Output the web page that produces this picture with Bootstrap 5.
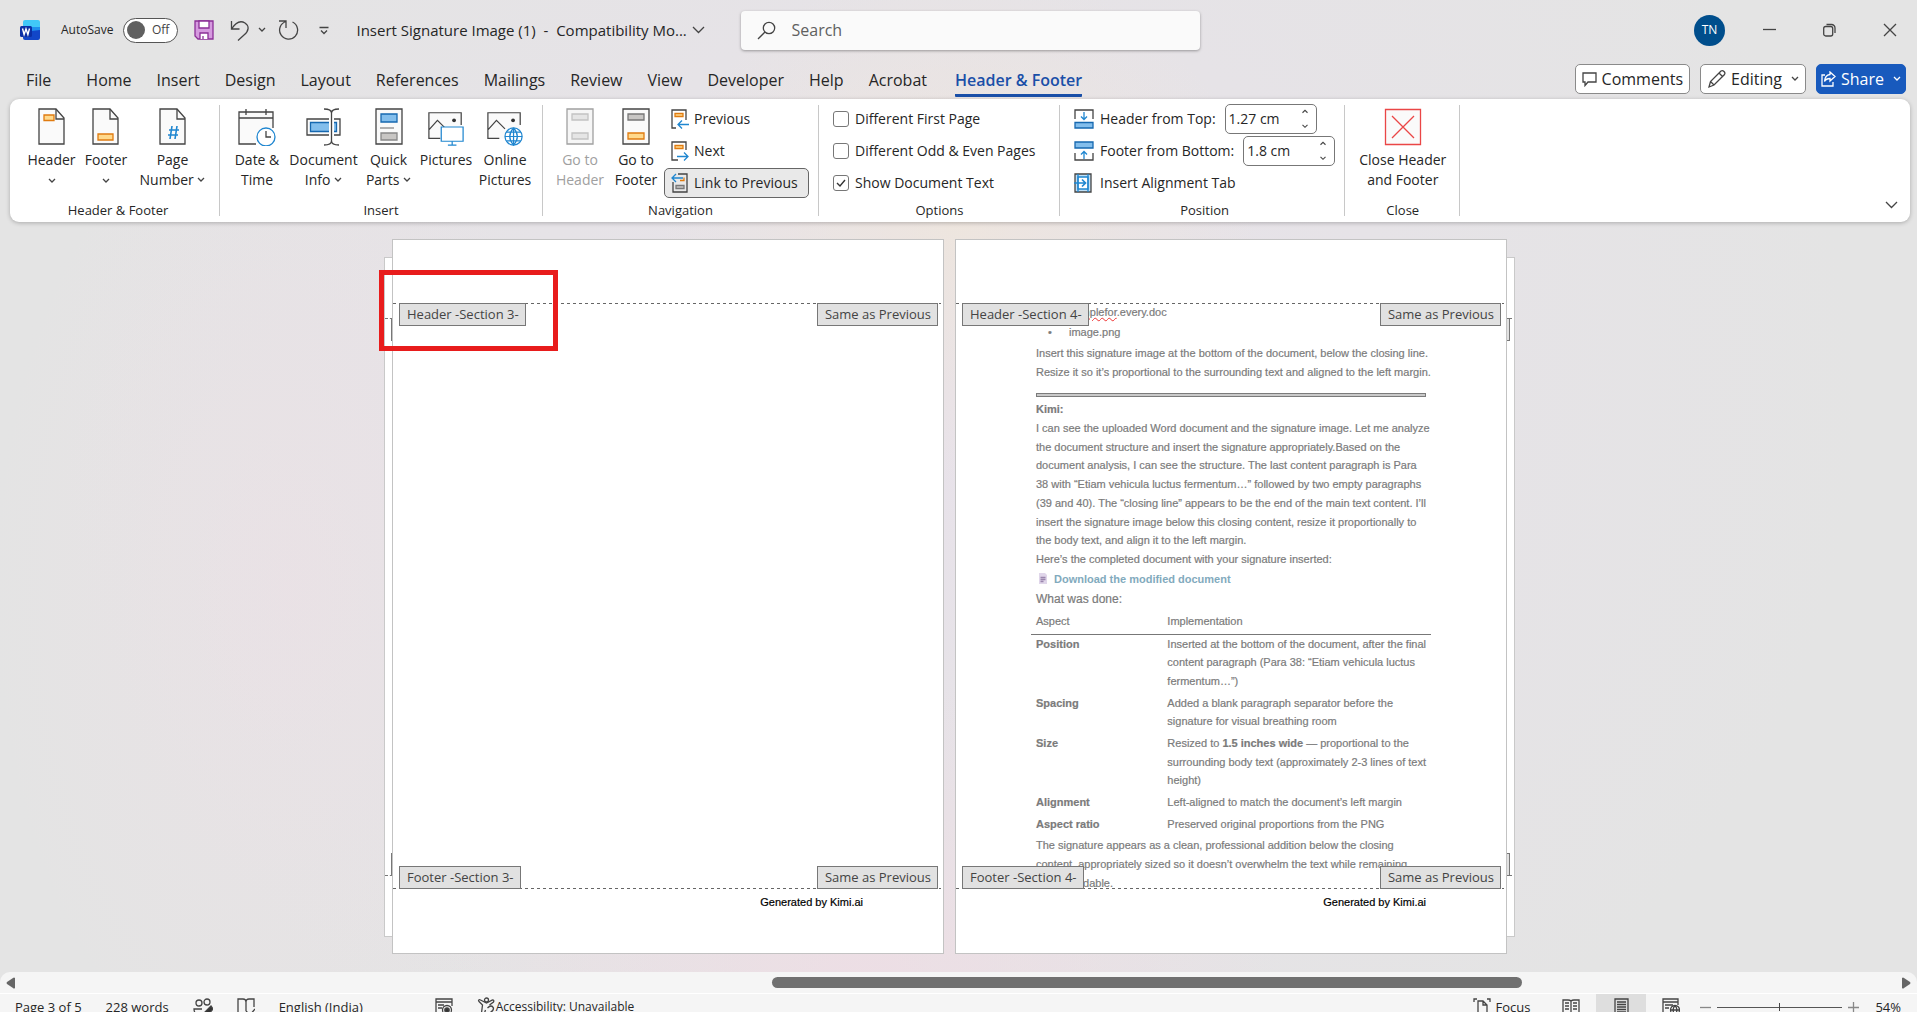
<!DOCTYPE html>
<html lang="en">
<head>
<meta charset="utf-8">
<meta name="viewport" content="width=device-width, initial-scale=1">
<title>Insert Signature Image (1) - Word</title>
<link href="https://cdn.jsdelivr.net/npm/bootstrap@5.3.0/dist/css/bootstrap.min.css" rel="stylesheet">
<style>
  body { font-family: "Open Sans", "Noto Sans", sans-serif; font-size: 14px; line-height: 20px; color: #262626; overflow: hidden; background: #e4e4e4; }
  button, input { font-family: inherit; color: inherit; }
  svg { display: block; flex: none; fill: none; stroke: #444; stroke-width: 1.3; }
  .plain { background: none; border: 0; padding: 0; display: flex; align-items: center; color: inherit; }
  .shell { height: calc(100vh + 8px); background:
      radial-gradient(ellipse 300px 260px at 50% 22%, rgba(239,230,220,.8), rgba(239,230,220,0)),
      radial-gradient(ellipse 420px 300px at 45% 96%, rgba(240,220,228,.7), rgba(240,220,228,0)),
      radial-gradient(ellipse 300px 520px at 15% 58%, rgba(238,224,230,.5), rgba(238,224,230,0)),
      radial-gradient(ellipse 900px 800px at 50% 40%, #e8e2ea, #e4e4e4 100%); }

  .titlebar { height: 60px; padding: 0 20px; }
  .brand-group { flex: 1 1 0; }
  .autosave { font-size: 12px; margin: 0 10px 0 21px; }
  .doc-title { font-size: 15px; margin-left: 27px; gap: 5px; white-space: nowrap; }
  .toggle { width: 55px; height: 25px; border: 1px solid #555; border-radius: 13px; background: #fff; padding: 0 8px 0 3px; font-size: 12px; justify-content: space-between; color: #444; }
  .toggle i { width: 18px; height: 18px; border-radius: 50%; background: #606060; }
  .searchbox { width: 459px; height: 39px; background: #fafafa; border-radius: 4px; box-shadow: 0 1px 3px rgba(0,0,0,.35); padding: 0 16px; gap: 16px; margin-left: 23px; }
  .searchbox input { border: 0; background: none; outline: 0; font-size: 16px; width: 100%; padding: 0; }
  .searchbox input::placeholder { color: #606060; opacity: 1; }
  .window-group { flex: 1 1 0; gap: 47px; }
  .avatar { width: 31px; height: 31px; border-radius: 50%; background: #004e8c; color: #fff; font-size: 12px; justify-content: center; margin-right: -9px; }

  .tabs { height: 39px; padding: 0 11px 0 26px; }
  .tabs nav { gap: 25px; }
  .tabs nav a { color: #262626; text-decoration: none; font-size: 16px; line-height: 28px; padding-top: 2px; border-bottom: 3px solid transparent; border-radius: 1px; }
  .tabs nav a:first-child { margin-right: 10px; }
  .tabs nav a.current { color: #1a4fa8; font-weight: 600; border-color: #1a4fa8; margin-left: 3px; }
  .cmds { gap: 10px; }
  .cmd { height: 30px; border: 1px solid #8a8a8a; border-radius: 5px; background: #fff; font-size: 16px; padding: 0 6px; gap: 5px; }
  .cmd.share { background: #185abd; border-color: #185abd; color: #fff; padding: 0 4px; }
  .cmd.share svg { stroke: #fff; }

  .ribbon { margin: 0 7px 0 10px; height: 123px; background: #fff; border-radius: 9px; box-shadow: 0 1px 4px rgba(0,0,0,.25); position: relative; padding: 4px 0; }
  .rgroup { padding: 0 9px; position: relative; }
  .rgroup::after { content: ""; position: absolute; right: 0; top: 2px; height: 111px; width: 1px; background: #c8c8c8; }
  .g-edges { padding: 0 9px 0 15px; }
  .g-insert, .g-nav { padding-right: 10px; }
  .g-options { padding: 0 14px; min-width: 241px; }
  .g-position { padding: 0 10px 0 14px; min-width: 283px; }
  .g-close { padding: 0 13px; min-width: 115px; }
  .rbody { height: 96px; }
  .rlabel { font-size: 13px; line-height: 22px; text-align: center; }
  .big { background: none; border: 0; padding: 5px 0 0; display: flex; flex-direction: column; align-items: center; gap: 4px; text-align: center; line-height: 20px; white-space: nowrap; }
  .big:disabled { color: #a0a0a0; }
  .big span svg { display: inline-block; }
  .w52 { width: 53px; } .w56 { width: 56px; } .w62 { width: 62px; } .w76 { width: 77px; }
  .rrow { height: 32px; display: flex; align-items: center; gap: 6px; white-space: nowrap; }
  .small-btn { height: 30px; width: 145px; border: 1px solid transparent; border-radius: 5px; background: none; padding: 0 6px; display: flex; align-items: center; gap: 5px; }
  .small-btn.on { background: #e9e9e9; border-color: #666; }
  .tick { appearance: none; width: 16px; height: 16px; border: 1px solid #777; border-radius: 3px; background: #fff; margin: 0; flex: none; }
  .tick:checked { background: #fff url("data:image/svg+xml,%3Csvg xmlns='http://www.w3.org/2000/svg' viewBox='0 0 14 14'%3E%3Cpath d='M3 7l3 3 5-6' fill='none' stroke='%23333' stroke-width='1.4'/%3E%3C/svg%3E") center/14px no-repeat; }
  .spin { width: 92px; height: 30px; border: 1px solid #777; border-radius: 5px; background: #fff; padding: 0 7px 0 3px; margin-left: 3px; display: flex; align-items: center; }
  .spin input { border: 0; padding: 0; width: 100%; outline: 0; background: none; }
  .spin div { display: flex; flex-direction: column; gap: 10px; }
  .collapse-btn { position: absolute; right: 12px; bottom: 13px; }

  .docarea { flex: 1 1 auto; min-height: 0; padding: 17px 18px 18px 0; }
  .spread { position: relative; gap: 11px; }
  .backsheet { position: absolute; top: 18px; bottom: 17px; width: 60px; background: #fff; border: 1px solid #c9c9c9; }
  .backsheet.lt { left: -8px; } .backsheet.rt { right: -8px; }
  .backsheet::before, .backsheet::after { content: ""; position: absolute; left: 0; right: 2px; border: 0 dashed #777; height: 22px; }
  .backsheet::before { top: 60px; border-top-width: 1px; }
  .backsheet::after { bottom: 60px; border-bottom-width: 1px; }
  .stub { position: absolute; left: 6px; right: 4px; height: 23px; background: #e1e1e1; border: 1px solid #777; }
  .stub.up { top: 60px; } .stub.down { bottom: 60px; }
  .sheet { position: relative; width: 552px; background: #fff; border: 1px solid #c3c3c3; display: flex; flex-direction: column; overflow: hidden; font-family: "Liberation Sans", Arial, sans-serif; font-size: 11px; }
  .zone { flex: none; height: 63px; margin-right: 2px; }
  .dash { flex: none; height: 1px; margin-right: 2px; background: repeating-linear-gradient(90deg, #666 0 3px, transparent 3px 6px); }
  .zone.made { height: 64px; color: #000; line-height: 18px; text-align: right; padding: 4px 78px 0 0; -webkit-text-stroke: .2px #000; }
  .tagbox { position: absolute; z-index: 2; height: 23px; padding: 0 6px 0 7px; background: #e1e1e1; border: 1px solid #777; color: #444; font: 13px/21px "Open Sans", sans-serif; white-space: nowrap; }
  .tagbox.t { top: 63px; } .tagbox.b { bottom: 64px; }
  .tagbox.l { left: 6px; } .tagbox.r { right: 5px; }
  .prose { flex: 1 1 0; min-height: 0; padding: 0 80px 0 80px; color: #7b7b7b; line-height: 1.7; -webkit-text-stroke: .2px #7b7b7b; }
  .prose p, .prose ul { margin: 0; white-space: nowrap; }
  .prose ul { padding-left: 33px; list-style: none; line-height: 20px; margin-bottom: 2px; margin-top: -2px; }
  .prose li { position: relative; }
  .prose li::before { content: "•"; position: absolute; left: -21px; }
  .prose u { text-decoration: underline wavy #e33; text-decoration-thickness: 1px; text-underline-offset: 1px; }
  .rule { height: 4px; border: 1px solid #7b7b7b; background: #c9c9c9; margin: 12px 0 3px; }
  .dl { color: #82aabd; font-weight: 700; text-decoration: none; line-height: 20px; display: flex; align-items: center; gap: 7px; -webkit-text-stroke: 0; padding-left: 3px; }
  .done { font-size: 12px; line-height: 21px; }
  .report { margin: 0 -5px; width: 400px; border-collapse: separate; border-spacing: 0; }
  .report th, .report td { padding: 0 5px 3px; vertical-align: top; white-space: nowrap; }
  .report thead th { font-weight: 400; line-height: 22px; padding-bottom: 2px; border-bottom: 1px solid #777; }
  .report tbody { position: relative; top: 0; }
  .report tbody th, .report tbody td { line-height: 1.7; }
  .report th:first-child { width: 134px; }
  .callout { position: absolute; z-index: 4; left: -13px; top: 31px; width: 179px; height: 81px; border: 5px solid #e81c1c; pointer-events: none; }

  .hscroll { height: 22px; background: #f5f5f5; border-bottom: 1px solid #fff; border-radius: 10px 10px 0 0; padding: 0 6px; }
  .hscroll .lane { flex: 1; margin: 0 10px; }
  .hscroll .thumb { height: 11px; border-radius: 6px; background: #707070; }
  .status { height: 26px; background: #f5f5f5; font-size: 13px; padding: 0 16px 0 15px; white-space: nowrap; }
  .access { font-size: 12px; }
  .viewbtn { width: 50px; height: 26px; justify-content: center; }
  .viewbtn.on { background: #dedede; }
  .zoomer { appearance: none; width: 125px; height: 9px; margin: 0 6px; background: linear-gradient(#555, #555) center/100% 1px no-repeat; }
  .zoomer::-webkit-slider-thumb { appearance: none; width: 1px; height: 8px; background: #444; }
</style>
<script src="https://cdn.jsdelivr.net/npm/bootstrap@5.3.0/dist/js/bootstrap.bundle.min.js"></script>
</head>
<body>
<svg width="0" height="0" class="position-absolute" aria-hidden="true">
  <symbol id="chev" viewBox="0 0 8 6"><path d="M1 1l3 3 3-3"/></symbol>
  <symbol id="chevup" viewBox="0 0 8 6"><path d="M1 4.500l3-3 3 3"/></symbol>
  <symbol id="leaf" viewBox="0 0 28 38"><path d="M1 1h17l8 9v26H1z" fill="#fafafa"/><path d="M18 1v10h8"/></symbol>
  <symbol id="scene" viewBox="0 0 38 40"><path d="M1 5h34v27H1z" fill="#fafafa" stroke="none"/><path d="M13 32H1V5h34v13M1 23l9-10 9 9"/><circle cx="27.500" cy="13" r="2" fill="#333" stroke="none"/></symbol>
</svg>
<div class="shell d-flex flex-column">

  <header class="titlebar d-flex align-items-center">
    <div class="brand-group d-flex align-items-center">
      <svg width="20" height="20" viewBox="0 0 20 20" style="stroke:none"><path d="M5 0h13a2 2 0 0 1 2 2v5H3V2a2 2 0 0 1 2-2z" fill="#41c8f8"/><path d="M3 7h17v7H3z" fill="#1f8fee"/><path d="M3 12l17-2v8a2 2 0 0 1-2 2H5a2 2 0 0 1-2-2z" fill="#1246c8"/><rect y="6" width="12" height="11" rx="1.500" fill="#0b2fa5"/><path d="M2.500 8.500l1.600 6 1.900-5.500 1.900 5.500 1.600-6" fill="none" stroke="#fff" stroke-width="1.400"/></svg>
      <span class="autosave" id="as">AutoSave</span>
      <button class="plain toggle" aria-labelledby="as"><i></i>Off</button>
      <button class="plain ms-3" aria-label="Save"><svg width="20" height="20" viewBox="0 0 20 20" style="stroke:#8b2f97"><path d="M1 1h18v18H4l-3-3z" fill="#d59adf"/><path d="M5 1h10v7H5z" fill="#fff"/><path d="M6 19v-6h8v6" fill="#fff"/><path d="M9 19v-3"/></svg></button>
      <button class="plain ms-3" aria-label="Undo"><svg width="20" height="21" viewBox="0 0 20 21"><path d="M1.500 1v8h8M1.500 9C6 2 11 .5 15 3c4.500 3 4 8-1 12l-6 5.500"/></svg></button>
      <button class="plain ms-2" aria-label="Undo options"><svg width="8" height="6"><use href="#chev"/></svg></button>
      <button class="plain ms-2 ps-1" aria-label="Redo"><svg width="21" height="21" viewBox="0 0 21 21"><path d="M1 1h7v7M8 1.500a9 9 0 1 0 6.500.5"/></svg></button>
      <button class="plain ms-3 ps-1" aria-label="Customize toolbar"><svg width="10" height="9" viewBox="0 0 10 9"><path d="M.5 1.500h9M2 4.500l3 3 3-3"/></svg></button>
      <button class="plain doc-title"><span>Insert Signature Image (1) &nbsp;- &nbsp;Compatibility Mo...</span><svg width="13" height="8" viewBox="0 0 13 8"><path d="M1 1l5.500 5.500L12 1"/></svg></button>
    </div>
    <div class="searchbox d-flex align-items-center">
      <svg width="19" height="19" viewBox="0 0 19 19"><circle cx="12" cy="7" r="5.700"/><path d="M8 11l-7 7"/></svg>
      <input type="text" placeholder="Search" aria-label="Search">
    </div>
    <div class="window-group d-flex align-items-center justify-content-end">
      <button class="plain avatar" aria-label="Account">TN</button>
      <button class="plain" aria-label="Minimize"><svg width="13" height="12"><path d="M0 5.500h13"/></svg></button>
      <button class="plain" aria-label="Restore"><svg width="13" height="14" viewBox="0 0 13 14"><rect x=".7" y="3.500" width="9" height="9.500" rx="2"/><path d="M3.500 1.500h5a3.500 3.500 0 0 1 3.500 3.500v5"/></svg></button>
      <button class="plain" aria-label="Close"><svg width="14" height="14"><path d="M1 1l12 12M13 1L1 13"/></svg></button>
    </div>
  </header>

  <div class="tabs d-flex justify-content-between align-items-start">
    <nav class="d-flex pt-1" aria-label="Ribbon tabs">
      <a href="#">File</a><a href="#">Home</a><a href="#">Insert</a><a href="#">Design</a><a href="#">Layout</a><a href="#">References</a><a href="#">Mailings</a><a href="#">Review</a><a href="#">View</a><a href="#">Developer</a><a href="#">Help</a><a href="#">Acrobat</a><a href="#" class="current" aria-current="page">Header &amp; Footer</a>
    </nav>
    <div class="cmds d-flex pt-1">
      <button class="cmd d-flex align-items-center"><svg width="15" height="16" viewBox="0 0 15 16"><path d="M1 2h13v9H6l-3 3.500V11H1z"/></svg>Comments</button>
      <button class="cmd d-flex align-items-center"><svg width="19" height="20" viewBox="0 0 19 20"><path d="M2 18l1.500-5.500L14 2q1.500-1 3 .5t.5 3L7 16zM12 4l4 4M3.500 12.500L7 16"/></svg>Editing<svg width="8" height="6" class="ms-1"><use href="#chev"/></svg></button>
      <button class="cmd share d-flex align-items-center"><svg width="15" height="16" viewBox="0 0 15 16"><path d="M4 4H1v11h11v-4M9 1l5 4.500L9 10V7.500q-4 0-5.500 3Q4 4 9 3.500z"/></svg>Share<svg width="8" height="6" class="ms-1"><use href="#chev"/></svg></button>
    </div>
  </div>

  <section class="ribbon d-flex">
    <div class="rgroup g-edges">
      <div class="rbody d-flex">
        <button class="big w52"><svg width="28" height="38"><use href="#leaf"/><path d="M6 7h10v5.500H6z" fill="#ffd98c" stroke="#e07b10"/></svg><span>Header<br><svg width="8" height="6"><use href="#chev"/></svg></span></button>
        <button class="big w56"><svg width="28" height="38"><use href="#leaf"/><path d="M6 26h15v6H6z" fill="#ffd98c" stroke="#e07b10"/></svg><span>Footer<br><svg width="8" height="6"><use href="#chev"/></svg></span></button>
        <button class="big w76"><svg width="28" height="38"><use href="#leaf"/><path d="M13 18l-2 13M18 18l-2 13M10 22h10M9 27h10" stroke="#1f86d0" stroke-width="1.600"/></svg><span>Page<br>Number <svg width="8" height="8" viewBox="0 0 8 8"><path d="M1 1l3 3 3-3"/></svg></span></button>
      </div>
      <div class="rlabel">Header &amp; Footer</div>
    </div>
    <div class="rgroup g-insert">
      <div class="rbody d-flex">
        <button class="big w56"><svg width="38" height="38" viewBox="0 0 38 38"><path d="M18 36H1V4h34v16" fill="#fafafa"/><path d="M1 10h34M8 1v6M28 1v6"/><circle cx="28" cy="29" r="9" fill="#fff" stroke="#1f86d0"/><path d="M28 23v6h5"/></svg><span>Date &amp;<br>Time</span></button>
        <button class="big w76"><svg width="36" height="38" viewBox="0 0 36 38"><path d="M1 11h33v16H1z" fill="#fafafa"/><path d="M4.500 14.500h26v9h-26z" fill="#83beec" stroke="#1668b0"/><path d="M25.500 3v32" stroke="#fff" stroke-width="5"/><path d="M18 1q7.500 0 7.500 4v28q0 4-7.500 4M33 1q-7.500 0-7.500 4v28q0 4 7.500 4"/></svg><span>Document<br>Info <svg width="8" height="8" viewBox="0 0 8 8"><path d="M1 1l3 3 3-3"/></svg></span></button>
        <button class="big w52"><svg width="28" height="38" viewBox="0 0 28 38"><path d="M1 1h26v35H1z" fill="#fafafa"/><path d="M6 6h16v8H6z" fill="#83beec" stroke="#1668b0"/><path d="M5 20h14" stroke="#888"/><path d="M6 25h16v7H6z" fill="#c8c6c4" stroke="#888"/></svg><span>Quick<br>Parts <svg width="8" height="8" viewBox="0 0 8 8"><path d="M1 1l3 3 3-3"/></svg></span></button>
        <button class="big w62"><svg width="38" height="38" viewBox="0 0 38 40"><use href="#scene"/><path d="M14 20h23v15H14z" fill="#fff" stroke="#1f86d0"/><path d="M25.500 35v4M21 39h9" stroke="#1f86d0"/></svg><span>Pictures</span></button>
        <button class="big w56"><svg width="38" height="38" viewBox="0 0 38 40"><use href="#scene"/><circle cx="28" cy="30" r="9" fill="#fff" stroke="#1f86d0"/><path d="M19 30h18M28 21v18M20.500 25.500h15M20.500 34.500h15M28 21q-8 9 0 18q8-9 0-18" stroke="#1f86d0"/></svg><span>Online<br>Pictures</span></button>
      </div>
      <div class="rlabel">Insert</div>
    </div>
    <div class="rgroup g-nav">
      <div class="rbody d-flex">
        <button class="big w56" disabled><svg width="28" height="38" viewBox="0 0 28 38" opacity=".5"><path d="M1 1h26v35H1z" fill="#eee"/><path d="M6 6h16v6H6zM6 25h16v6H6z" fill="#ccc" stroke="#888"/></svg><span>Go to<br>Header</span></button>
        <button class="big w56"><svg width="28" height="38" viewBox="0 0 28 38"><path d="M1 1h26v35H1z" fill="#fafafa"/><path d="M6 6h16v6H6z" fill="#c8c6c4" stroke="#777"/><path d="M6 25h16v6H6z" fill="#ffd98c" stroke="#e07b10"/></svg><span>Go to<br>Footer</span></button>
        <div>
          <div class="rrow"><button class="small-btn"><svg width="18" height="20" viewBox="0 0 18 20"><path d="M15 11V1H1v18h4"/><path d="M4 4.500h8v3H4z" fill="#ffd98c" stroke="#e07b10"/><path d="M18 15.500H7M11 11.500l-4 4 4 4" stroke="#1f86d0"/></svg>Previous</button></div>
          <div class="rrow"><button class="small-btn"><svg width="18" height="20" viewBox="0 0 18 20"><path d="M15 9V1H1v18h6"/><path d="M4 4.500h8v3H4z" fill="#ffd98c" stroke="#e07b10"/><path d="M6 15.500h11M13 11.500l4 4-4 4" stroke="#1f86d0"/></svg>Next</button></div>
          <div class="rrow"><button class="small-btn on"><svg width="18" height="20" viewBox="0 0 18 20"><path d="M7 1h9v18H2V9"/><path d="M9 7.500h4v-3" stroke="#e07b10"/><path d="M5 12.500h8v3H5z" fill="#c8c6c4" stroke="#777"/><path d="M12 5H1M5 1L1 5l4 4" stroke="#1f86d0"/></svg>Link to Previous</button></div>
        </div>
      </div>
      <div class="rlabel">Navigation</div>
    </div>
    <div class="rgroup g-options">
      <div class="rbody">
        <div class="rrow"><input class="tick" type="checkbox" id="o1"><label for="o1">Different First Page</label></div>
        <div class="rrow"><input class="tick" type="checkbox" id="o2"><label for="o2">Different Odd &amp; Even Pages</label></div>
        <div class="rrow"><input class="tick" type="checkbox" id="o3" checked><label for="o3">Show Document Text</label></div>
      </div>
      <div class="rlabel">Options</div>
    </div>
    <div class="rgroup g-position">
      <div class="rbody">
        <div class="rrow"><svg width="20" height="20" viewBox="0 0 20 20"><path d="M4 1H1v9M16 1h3v9M1 1h18"/><path d="M10 3v7M7 7.500l3 3 3-3" stroke="#1f86d0"/><path d="M1 13.500h18v5.500H1z" fill="#83beec" stroke="#1668b0"/></svg><label for="ht">Header from Top:</label><div class="spin"><input id="ht" type="text" value="1.27 cm"><div><button class="plain" aria-label="Increase header distance"><svg width="8" height="5"><use href="#chevup"/></svg></button><button class="plain" aria-label="Decrease header distance"><svg width="8" height="5"><use href="#chev"/></svg></button></div></div></div>
        <div class="rrow"><svg width="20" height="20" viewBox="0 0 20 20"><path d="M1 12v7h18v-7"/><path d="M10 18v-7M7 13.500l3-3 3 3" stroke="#1f86d0"/><path d="M1 1h18v6H1z" fill="#83beec" stroke="#1668b0"/></svg><label for="fb">Footer from Bottom:</label><div class="spin"><input id="fb" type="text" value="1.8 cm"><div><button class="plain" aria-label="Increase footer distance"><svg width="8" height="5"><use href="#chevup"/></svg></button><button class="plain" aria-label="Decrease footer distance"><svg width="8" height="5"><use href="#chev"/></svg></button></div></div></div>
        <div class="rrow"><button class="plain gap-2"><svg width="18" height="20" viewBox="0 0 18 20"><path d="M1 1h16v18H1z" fill="#bfe0f7"/><path d="M4 4h10v12H4z" fill="#fff" stroke="#1f86d0"/><path d="M4 1v18M14 1v18" stroke="#1f86d0"/><path d="M0 10h11M8 6.500l3.500 3.500L8 13.500" stroke="#1f86d0" stroke-width="1.700"/></svg>Insert Alignment Tab</button></div>
      </div>
      <div class="rlabel">Position</div>
    </div>
    <div class="rgroup g-close">
      <div class="rbody d-flex justify-content-center">
        <button class="big"><svg width="38" height="38" viewBox="0 0 38 38" style="stroke:#ea4646"><path d="M1.500 1.500h35v35h-35z" fill="#fafafa"/><path d="M8 8l22 22M30 8L8 30"/></svg><span>Close Header<br>and Footer</span></button>
      </div>
      <div class="rlabel">Close</div>
    </div>
    <button class="plain collapse-btn" aria-label="Collapse ribbon"><svg width="13" height="8" viewBox="0 0 13 8"><path d="M1 1l5.500 5.500L12 1"/></svg></button>
  </section>

  <main class="docarea d-flex justify-content-center">
    <div class="spread d-flex">
      <div class="backsheet lt"><div class="stub up"></div><div class="stub down"></div></div>
      <div class="backsheet rt"><div class="stub up"></div><div class="stub down"></div></div>
      <article class="sheet">
        <div class="zone"></div><div class="dash"></div>
        <div class="flex-grow-1"></div>
        <div class="dash"></div><div class="zone made">Generated by Kimi.ai</div>
        <span class="tagbox t l">Header -Section 3-</span><span class="tagbox t r">Same as Previous</span>
        <span class="tagbox b l">Footer -Section 3-</span><span class="tagbox b r">Same as Previous</span>
      </article>
      <article class="sheet">
        <div class="zone"></div><div class="dash"></div>
        <div class="prose">
          <ul><li><u>samplefor</u>.every.doc</li><li>image.png</li></ul>
          <p>Insert this signature image at the bottom of the document, below the closing line.<br>Resize it so it’s proportional to the surrounding text and aligned to the left margin.</p>
          <div class="rule"></div>
          <p><b>Kimi:</b></p>
          <p>I can see the uploaded Word document and the signature image. Let me analyze<br>the document structure and insert the signature appropriately.Based on the<br>document analysis, I can see the structure. The last content paragraph is Para<br>38 with “Etiam vehicula luctus fermentum…” followed by two empty paragraphs<br>(39 and 40). The “closing line” appears to be the end of the main text content. I’ll<br>insert the signature image below this closing content, resize it proportionally to<br>the body text, and align it to the left margin.</p>
          <p>Here’s the completed document with your signature inserted:</p>
          <a class="dl" href="#"><svg width="8" height="11" viewBox="0 0 8 11" style="stroke:#9a86ad"><path d="M0 0h6l2 2v9H0z" fill="#e0d6ea" stroke="none"/><path d="M1.500 4.500h5M1.500 6.500h5M1.500 8.500h3"/></svg>Download the modified document</a>
          <p class="done">What was done:</p>
          <table class="report">
            <thead><tr><th>Aspect</th><th>Implementation</th></tr></thead>
            <tbody>
              <tr><th>Position</th><td>Inserted at the bottom of the document, after the final<br>content paragraph (Para 38: “Etiam vehicula luctus<br>fermentum…”)</td></tr>
              <tr><th>Spacing</th><td>Added a blank paragraph separator before the<br>signature for visual breathing room</td></tr>
              <tr><th>Size</th><td>Resized to <b>1.5 inches wide</b> — proportional to the<br>surrounding body text (approximately 2-3 lines of text<br>height)</td></tr>
              <tr><th>Alignment</th><td>Left-aligned to match the document’s left margin</td></tr>
              <tr><th>Aspect ratio</th><td>Preserved original proportions from the PNG</td></tr>
            </tbody>
          </table>
          <p>The signature appears as a clean, professional addition below the closing<br>content, appropriately sized so it doesn’t overwhelm the text while remaining<br>easily readable.</p>
        </div>
        <div class="dash"></div><div class="zone made">Generated by Kimi.ai</div>
        <span class="tagbox t l">Header -Section 4-</span><span class="tagbox t r">Same as Previous</span>
        <span class="tagbox b l">Footer -Section 4-</span><span class="tagbox b r">Same as Previous</span>
      </article>
      <div class="callout"></div>
    </div>
  </main>

  <div class="hscroll d-flex align-items-center">
    <svg width="9" height="12" viewBox="0 0 9 12" style="stroke:none"><path d="M9 1v10q-1 1-2 0L1 7q-1-1 0-2l6-4q1-1 2 0z" fill="#666"/></svg>
    <div class="lane"><div class="thumb" style="margin-left:40%;width:40.200%"></div></div>
    <svg width="9" height="12" viewBox="0 0 9 12" style="stroke:none"><path d="M0 1v10q1 1 2 0l6-4q1-1 0-2L2 1Q1 0 0 1z" fill="#666"/></svg>
  </div>

  <footer class="status d-flex align-items-center justify-content-between">
    <div class="d-flex align-items-center gap-4">
      <button class="plain">Page 3 of 5</button>
      <button class="plain">228 words</button>
      <button class="plain" aria-label="Editors"><svg width="20" height="20" viewBox="0 0 20 20"><circle cx="6" cy="6" r="3"/><circle cx="14" cy="5" r="3"/><path d="M9 17H5q-4 0-4-5h8"/><path d="M18 9l-7 7-1 4 4-1 6-7z" fill="#333"/></svg></button>
      <button class="plain me-n1" aria-label="Proofing"><svg width="18" height="20" viewBox="0 0 18 20"><path d="M9 17q-3-2-8 0V2h5q3 0 3 3 0-3 3-3h5v8M9 5v9M9 14l4 4 5-6"/></svg></button>
      <button class="plain me-5">English (India)</button>
      <button class="plain me-n1" aria-label="Macro recording"><svg width="18" height="18" viewBox="0 0 18 18"><path d="M7 16H1V1h16v7M1 4h16M3 7h6M3 10h4"/><circle cx="12" cy="12" r="4.500"/><circle cx="12" cy="12" r="2.200" fill="#333"/></svg></button>
      <button class="plain access"><svg width="19" height="20" viewBox="0 0 18 20"><circle cx="9" cy="3" r="2"/><path d="M1 4q0-2 2-1l6 3 6-3q2 0 1 2l-4 3M1 4l4 4-1 8q1 3 3 0l1-3M10 11q4-4 6 0 0 3-3 4"/></svg>Accessibility: Unavailable</button>
    </div>
    <div class="d-flex align-items-center">
      <button class="plain gap-1 me-3"><svg width="18" height="20" viewBox="0 0 18 20"><path d="M1 5V2h3M14 2h3v3M5 4h5l4 4v10H5zM10 4v4h4"/></svg>Focus</button>
      <button class="plain viewbtn" aria-label="Read mode"><svg width="18" height="18" viewBox="0 0 18 18"><path d="M9 3v13M1 2h5q2 0 3 1 1-1 3-1h5v13h-5q-2 0-3 1-1-1-3-1H1zM3 5h4M3 8h4M3 11h4M11 5h4M11 8h4M11 11h4"/></svg></button>
      <button class="plain viewbtn on" aria-label="Print layout"><svg width="15" height="18" viewBox="0 0 15 18"><path d="M1 1h13v16H1zM3 4h9M3 6.500h9M3 9h9M3 11.500h9M3 14h9"/></svg></button>
      <button class="plain viewbtn" aria-label="Web layout"><svg width="18" height="18" viewBox="0 0 18 18"><path d="M7 16H1V1h15v6M1 4h15M3 7h8M3 10h4"/><circle cx="13" cy="12" r="4.500"/><path d="M8.500 12h9M13 7.500q-4 4.500 0 9 4-4.500 0-9"/></svg></button>
      <button class="plain ms-1" aria-label="Zoom out"><svg width="11" height="11" style="stroke:#888"><path d="M0 5.500h11"/></svg></button>
      <input class="zoomer" type="range" min="0" max="100" value="50" aria-label="Zoom">
      <button class="plain me-3" aria-label="Zoom in"><svg width="11" height="11" style="stroke:#888"><path d="M0 5.500h11M5.500 0v11"/></svg></button>
      <button class="plain">54%</button>
    </div>
  </footer>
</div>
</body>
</html>
